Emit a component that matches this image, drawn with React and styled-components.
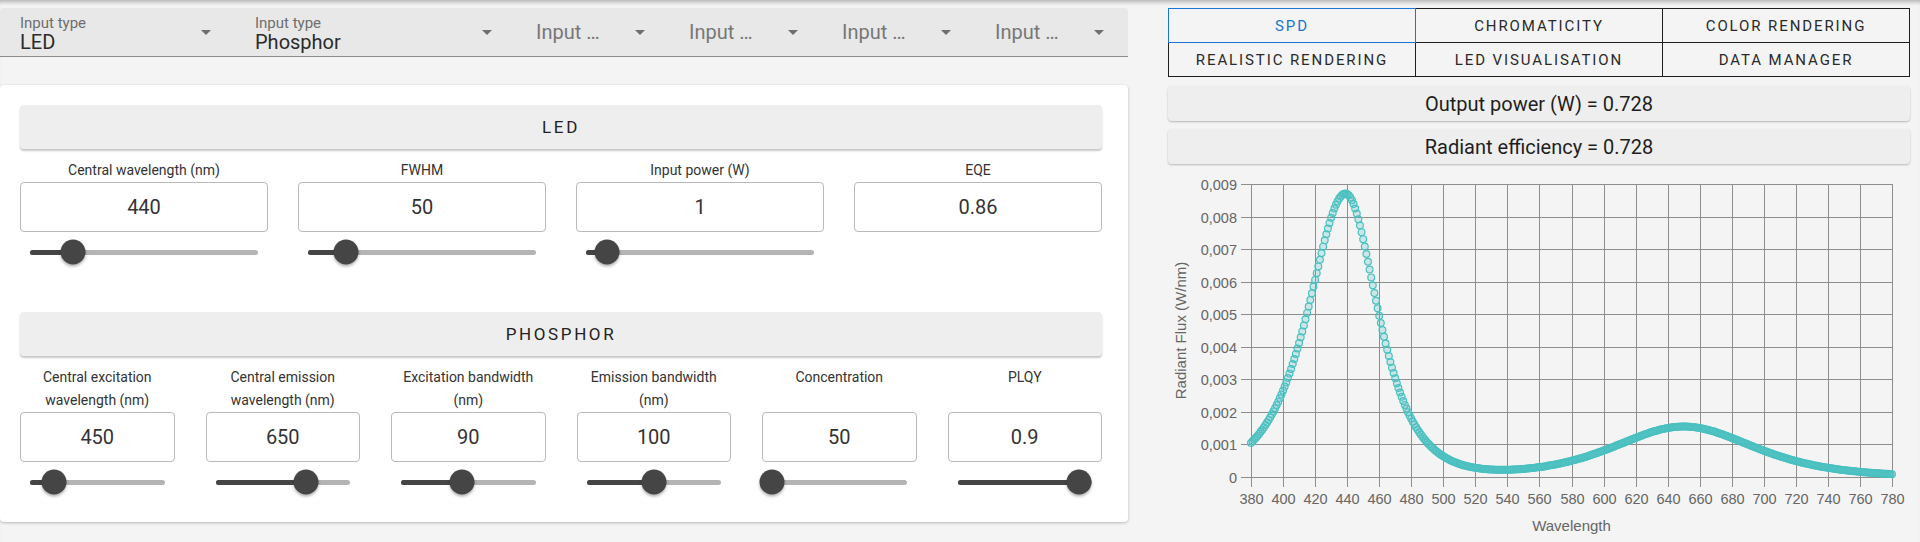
import React from "react";
import styled, { createGlobalStyle } from "styled-components";

const GlobalStyle = createGlobalStyle`
  html, body { margin: 0; padding: 0; background: #f4f4f4; }
  body { font-family: Roboto, "Liberation Sans", Arial, sans-serif; color: #222; }
  * { box-sizing: border-box; }
`;

const Page = styled.div`
  width: 1920px;
  height: 542px;
  overflow: hidden;
  background: #f4f4f4;
  box-shadow: inset 0 5px 4px -3px rgba(0, 0, 0, 0.28);
  display: flex;
  gap: 40px;
  padding: 8px 10px 0 0;
`;

const LeftColumn = styled.div`
  width: 1128px;
  flex: none;
  display: flex;
  flex-direction: column;
`;

const RightColumn = styled.div`
  width: 742px;
  flex: none;
  display: flex;
  flex-direction: column;
`;

/* ---------- select bar ---------- */
const SelectBar = styled.div`
  display: flex;
  height: 49px;
  background: #e8e8e8;
  border-bottom: 1px solid #8c8c8c;
  border-radius: 4px 4px 0 0;
`;

const SelectField = styled.div`
  width: ${(p) => p.$w}px;
  flex: none;
  display: flex;
  align-items: ${(p) => (p.$filled ? "flex-start" : "center")};
  padding: ${(p) => (p.$filled ? "8px 17px 0 20px" : "0 17px 0 20px")};
  position: relative;
`;

const SelectContent = styled.div`
  flex: 1;
  min-width: 0;
  display: flex;
  flex-direction: column;
`;

const SelectLabel = styled.span`
  font-size: 15px;
  line-height: 14px;
  color: #6e6e6e;
`;

const SelectValue = styled.span`
  font-size: 20px;
  line-height: 24px;
  color: #2b2b2b;
`;

const SelectPlaceholder = styled.span`
  font-size: 20px;
  line-height: 24px;
  color: #777;
  white-space: nowrap;
`;

const Chevron = styled.svg`
  width: 24px;
  height: 24px;
  flex: none;
  fill: #6f6f6f;
  align-self: center;
  margin-top: ${(p) => (p.$filled ? "-8px" : "0")};
`;

/* ---------- card ---------- */
const Card = styled.div`
  margin-top: 28px;
  height: 437px;
  background: #fff;
  border-radius: 4px;
  box-shadow: 0 1px 3px rgba(0, 0, 0, 0.25);
  padding: 20px 26px 20px 20px;
  display: flex;
  flex-direction: column;
`;

const Section = styled.div`
  display: flex;
  flex-direction: column;
  & + & {
    margin-top: 40px;
  }
`;

const SectionHeader = styled.div`
  height: 44px;
  background: #eeeeee;
  border-radius: 4px;
  box-shadow: 0 2px 2px rgba(0, 0, 0, 0.22);
  display: flex;
  align-items: center;
  justify-content: center;
  font-size: 17px;
  letter-spacing: 2.6px;
  color: #222;
`;

const FieldGrid = styled.div`
  display: grid;
  grid-template-columns: repeat(${(p) => p.$cols}, 1fr);
  column-gap: ${(p) => p.$gap}px;
  margin-top: 10px;
`;

const Field = styled.div`
  display: flex;
  flex-direction: column;
  min-width: 0;
`;

const FieldLabel = styled.div`
  height: ${(p) => p.$lines * 23}px;
  font-size: 14px;
  line-height: 23px;
  color: #333;
  text-align: center;
`;

const ValueBox = styled.div`
  height: 50px;
  border: 1px solid #b9b9b9;
  border-radius: 4px;
  display: flex;
  align-items: center;
  justify-content: center;
  font-size: 20px;
  color: #333;
`;

const SliderWrap = styled.div`
  height: 40px;
  padding: 0 10px;
  display: flex;
  align-items: center;
`;

const SliderRail = styled.div`
  position: relative;
  flex: 1;
  height: 5px;
  border-radius: 3px;
  background: #b4b4b4;
`;

const SliderTrack = styled.div`
  position: absolute;
  left: 0;
  top: 0;
  bottom: 0;
  border-radius: 3px;
  background: #454545;
`;

const SliderThumb = styled.div`
  position: absolute;
  top: 50%;
  width: 25px;
  height: 25px;
  border-radius: 50%;
  background: #454545;
  transform: translate(-50%, -50%);
  box-shadow: 0 2px 3px rgba(0, 0, 0, 0.3);
`;

/* ---------- right side ---------- */
const TabGrid = styled.div`
  display: grid;
  grid-template-columns: repeat(3, 1fr);
  grid-auto-rows: 33px;
  gap: 1px;
  background: #1e1e1e;
  border: 1px solid #1e1e1e;
`;

const Tab = styled.div`
  background: #f4f4f4;
  display: flex;
  align-items: center;
  justify-content: center;
  font-size: 15px;
  letter-spacing: 1.9px;
  color: ${(p) => (p.$active ? "#1976d2" : "#2a2a2a")};
  outline: ${(p) => (p.$active ? "1px solid #1976d2" : "none")};
  position: relative;
  z-index: ${(p) => (p.$active ? 1 : 0)};
`;

const StatBox = styled.div`
  height: 35px;
  margin-top: ${(p) => p.$mt}px;
  background: #eeeeee;
  border-radius: 4px;
  box-shadow: 0 1px 2px rgba(0, 0, 0, 0.25);
  display: flex;
  align-items: center;
  justify-content: center;
  font-size: 20px;
  color: #1e1e1e;
`;

const ChartSvg = styled.svg`
  display: block;
  flex: none;
  font-family: "Liberation Sans", Arial, sans-serif;
`;

/* ---------- data ---------- */
const selects = [
  { w: 235, label: "Input type", value: "LED" },
  { w: 281, label: "Input type", value: "Phosphor" },
  { w: 153 },
  { w: 153 },
  { w: 153 },
  { w: 153 },
];

const ledFields = [
  { label: "Central wavelength (nm)", value: "440", pos: 0.19 },
  { label: "FWHM", value: "50", pos: 0.167 },
  { label: "Input power (W)", value: "1", pos: 0.09 },
  { label: "EQE", value: "0.86" },
];

const phosphorFields = [
  { label: "Central excitation wavelength (nm)", value: "450", pos: 0.18 },
  { label: "Central emission wavelength (nm)", value: "650", pos: 0.67 },
  { label: "Excitation bandwidth (nm)", value: "90", pos: 0.45 },
  { label: "Emission bandwidth (nm)", value: "100", pos: 0.5 },
  { label: "Concentration", value: "50", pos: 0 },
  { label: "PLQY", value: "0.9", pos: 0.9 },
];

const tabs = [
  "SPD",
  "CHROMATICITY",
  "COLOR RENDERING",
  "REALISTIC RENDERING",
  "LED VISUALISATION",
  "DATA MANAGER",
];

function ArrowDrop({ filled }) {
  return (
    <Chevron viewBox="0 0 24 24" $filled={filled}>
      <path d="M7 10l5 5 5-5z" />
    </Chevron>
  );
}

function Slider({ pos }) {
  const pct = `${pos * 100}%`;
  return (
    <SliderWrap>
      <SliderRail>
        <SliderTrack style={{ width: pct }} />
        <SliderThumb style={{ left: pct }} />
      </SliderRail>
    </SliderWrap>
  );
}

function FieldSection({ title, fields, cols, gap, lines }) {
  return (
    <Section>
      <SectionHeader>{title}</SectionHeader>
      <FieldGrid $cols={cols} $gap={gap}>
        {fields.map((f) => (
          <Field key={f.label}>
            <FieldLabel $lines={lines}>{f.label}</FieldLabel>
            <ValueBox>{f.value}</ValueBox>
            {f.pos !== undefined && <Slider pos={f.pos} />}
          </Field>
        ))}
      </FieldGrid>
    </Section>
  );
}

const sech = (x) => 2 / (Math.exp(x) + Math.exp(-x));
const spd = (l) => {
  const d = l - 439;
  const led = 0.0087 * sech(d / (d < 0 ? 21 : 18));
  const phos = 0.00155 * Math.pow(sech((l - 650) / 50), 1.5);
  return led + phos;
};

function SpdChart() {
  const W = 742;
  const H = 378;
  const X0 = 83;
  const X1 = 724;
  const Y0 = 20;
  const Y1 = 313;
  const xs = (v) => X0 + ((v - 380) / 400) * (X1 - X0);
  const ys = (v) => Y1 - (v / 0.009) * (Y1 - Y0);
  const xTicks = [];
  for (let v = 380; v <= 780; v += 20) xTicks.push(v);
  const yTicks = [];
  for (let i = 0; i <= 9; i++) yTicks.push(i);
  const pts = [];
  for (let l = 380; l <= 780; l += 1) pts.push([xs(l), ys(spd(l))]);
  const grid = "#8e8e8e";
  return (
    <ChartSvg width={W} height={H} viewBox={`0 0 ${W} ${H}`}>
      {yTicks.map((i) => {
        const y = Math.round(ys(i * 0.001)) + 0.5;
        return (
          <g key={`y${i}`}>
            <line x1={X0 - 10} x2={X1} y1={y} y2={y} stroke={grid} strokeWidth="1" />
            <text x={X0 - 14} y={y + 5} textAnchor="end" fontSize="14.5" fill="#666">
              {i === 0 ? "0" : `0,00${i}`}
            </text>
          </g>
        );
      })}
      {xTicks.map((v) => {
        const x = Math.round(xs(v)) + 0.5;
        return (
          <g key={`x${v}`}>
            <line x1={x} x2={x} y1={Y0} y2={Y1 + 10} stroke={grid} strokeWidth="1" />
            <text x={x} y={Y1 + 27} textAnchor="middle" fontSize="14.5" fill="#666">
              {v}
            </text>
          </g>
        );
      })}
      <text
        x="0"
        y="0"
        transform={`translate(18 ${(Y0 + Y1) / 2}) rotate(-90)`}
        textAnchor="middle"
        fontSize="15"
        fill="#666"
      >
        Radiant Flux (W/nm)
      </text>
      <text x={(X0 + X1) / 2} y={H - 11} textAnchor="middle" fontSize="15" fill="#666">
        Wavelength
      </text>
      {pts.map(([x, y], i) => (
        <circle
          key={i}
          cx={x}
          cy={y}
          r="3.4"
          fill="rgba(75,192,192,0.25)"
          stroke="rgb(75,192,192)"
          strokeWidth="1.2"
        />
      ))}
    </ChartSvg>
  );
}

export default function App() {
  return (
    <>
      <GlobalStyle />
      <Page>
        <LeftColumn>
          <SelectBar>
            {selects.map((s, i) => (
              <SelectField key={i} $w={s.w} $filled={!!s.value}>
                <SelectContent>
                  {s.value ? (
                    <>
                      <SelectLabel>{s.label}</SelectLabel>
                      <SelectValue>{s.value}</SelectValue>
                    </>
                  ) : (
                    <SelectPlaceholder>Input …</SelectPlaceholder>
                  )}
                </SelectContent>
                <ArrowDrop filled={!!s.value} />
              </SelectField>
            ))}
          </SelectBar>
          <Card>
            <FieldSection title="LED" fields={ledFields} cols={4} gap={30} lines={1} />
            <FieldSection title="PHOSPHOR" fields={phosphorFields} cols={6} gap={31} lines={2} />
          </Card>
        </LeftColumn>
        <RightColumn>
          <TabGrid>
            {tabs.map((t, i) => (
              <Tab key={t} $active={i === 0}>
                {t}
              </Tab>
            ))}
          </TabGrid>
          <StatBox $mt={9}>Output power (W) = 0.728</StatBox>
          <StatBox $mt={8}>Radiant efficiency = 0.728</StatBox>
          <SpdChart />
        </RightColumn>
      </Page>
    </>
  );
}
